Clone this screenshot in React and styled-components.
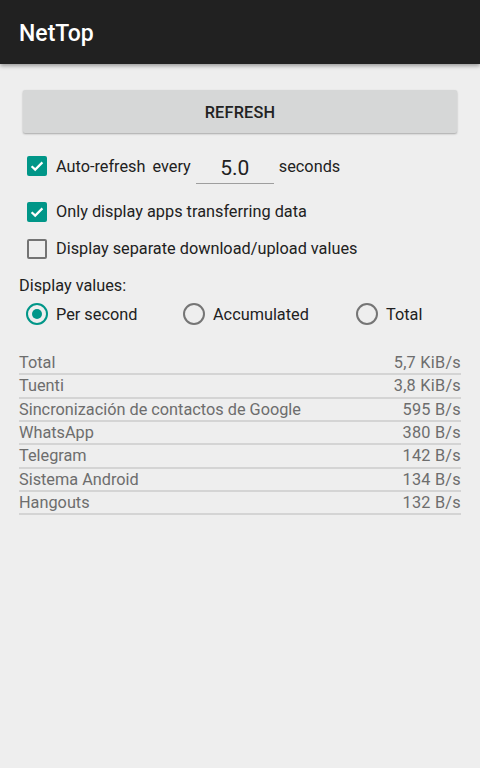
import styled, { createGlobalStyle } from "styled-components";

const GlobalStyle = createGlobalStyle`
  html, body {
    margin: 0;
    padding: 0;
    background-color: #eeeeee;
  }
  * {
    box-sizing: border-box;
  }
`;

const rows = [
  { name: "Total", value: "5,7 KiB/s" },
  { name: "Tuenti", value: "3,8 KiB/s" },
  { name: "Sincronización de contactos de Google", value: "595 B/s" },
  { name: "WhatsApp", value: "380 B/s" },
  { name: "Telegram", value: "142 B/s" },
  { name: "Sistema Android", value: "134 B/s" },
  { name: "Hangouts", value: "132 B/s" },
];

function CheckBox({ checked }) {
  return (
    <Box checked={checked}>
      {checked && (
        <svg width="16" height="16" viewBox="0 0 16 16">
          <path
            d="M2.6 8.2 L6.2 11.6 L13.4 4.4"
            fill="none"
            stroke="#ffffff"
            strokeWidth="2.2"
          />
        </svg>
      )}
    </Box>
  );
}

function App() {
  return (
    <Page>
      <GlobalStyle />
      <TopBar>NetTop</TopBar>
      <Content>
        <RefreshButton>REFRESH</RefreshButton>

        <OptionRow height={46} top={10}>
          <CheckBox checked />
          <Label>Auto-refresh</Label>
          <Label gap={7}>every</Label>
          <NumberField>5.0</NumberField>
          <Label gap={5}>seconds</Label>
        </OptionRow>
        <OptionRow height={37} top={4}>
          <CheckBox checked />
          <Label>Only display apps transferring data</Label>
        </OptionRow>
        <OptionRow height={37}>
          <CheckBox />
          <Label>Display separate download/upload values</Label>
        </OptionRow>

        <SectionTitle>Display values:</SectionTitle>
        <RadioGroup>
          <RadioItem>
            <Radio selected />
            <Label gap={8}>Per second</Label>
          </RadioItem>
          <RadioItem>
            <Radio />
            <Label gap={8}>Accumulated</Label>
          </RadioItem>
          <RadioItem>
            <Radio />
            <Label gap={8}>Total</Label>
          </RadioItem>
        </RadioGroup>

        <Table>
          {rows.map((row) => (
            <TableRow key={row.name}>
              <span>{row.name}</span>
              <span>{row.value}</span>
            </TableRow>
          ))}
        </Table>
      </Content>
    </Page>
  );
}

export default App;

const Page = styled.div`
  width: 100%;
  min-height: 768px;
  background-color: #eeeeee;
  font-family: Roboto, "Liberation Sans", sans-serif;
`;

const TopBar = styled.header`
  height: 64px;
  display: flex;
  align-items: center;
  padding: 3px 0 0 19px;
  background-color: #212121;
  color: #ffffff;
  font-size: 23px;
  font-weight: 500;
  box-shadow: 0 2px 4px rgba(0, 0, 0, 0.35);
`;

const Content = styled.main`
  padding: 0 19px;
  display: flex;
  flex-direction: column;
`;

const RefreshButton = styled.button`
  margin: 26px 4px 0;
  height: 43px;
  padding-top: 2px;
  border: none;
  border-radius: 2px;
  background-color: #d6d7d7;
  box-shadow: 0 1px 2px rgba(0, 0, 0, 0.3);
  font-family: Roboto, "Liberation Sans", sans-serif;
  font-size: 16.3px;
  font-weight: 500;
  color: #222222;
  letter-spacing: 0.2px;
`;

const OptionRow = styled.div`
  height: ${(props) => props.height}px;
  margin-top: ${(props) => props.top || 0}px;
  padding-left: 8px;
  display: flex;
  align-items: center;
`;

const Box = styled.div`
  width: 20px;
  height: 20px;
  border-radius: 2px;
  display: flex;
  align-items: center;
  justify-content: center;
  background-color: ${(props) => (props.checked ? "#009688" : "transparent")};
  border: ${(props) => (props.checked ? "none" : "2px solid #737373")};
`;

const Label = styled.span`
  margin-left: ${(props) => (props.gap === undefined ? 9 : props.gap)}px;
  font-size: 16.3px;
  color: #212121;
  white-space: nowrap;
`;

const NumberField = styled.span`
  margin-left: 5px;
  width: 78px;
  height: 32px;
  margin-top: 4px;
  display: flex;
  align-items: center;
  justify-content: center;
  border-bottom: 1.5px solid #9e9e9e;
  font-size: 21px;
  color: #212121;
`;

const SectionTitle = styled.div`
  margin-top: 9px;
  height: 20px;
  line-height: 20px;
  font-size: 16.3px;
  color: #212121;
`;

const RadioGroup = styled.div`
  height: 36px;
  padding-left: 7px;
  display: grid;
  grid-template-columns: 157px 173px auto;
  align-items: center;
`;

const RadioItem = styled.div`
  display: flex;
  align-items: center;
`;

const Radio = styled.div`
  width: 22px;
  height: 22px;
  border-radius: 50%;
  border: 2px solid ${(props) => (props.selected ? "#009688" : "#757575")};
  display: flex;
  align-items: center;
  justify-content: center;
  &::after {
    content: "";
    width: 10px;
    height: 10px;
    border-radius: 50%;
    background-color: ${(props) => (props.selected ? "#009688" : "transparent")};
  }
`;

const Table = styled.div`
  margin-top: 20px;
  display: flex;
  flex-direction: column;
`;

const TableRow = styled.div`
  height: 23.33px;
  display: flex;
  justify-content: space-between;
  align-items: center;
  border-bottom: 2px solid #d4d4d4;
  font-size: 16.3px;
  color: #6d6d6d;
  span:last-child {
    letter-spacing: 0.25px;
  }
`;
